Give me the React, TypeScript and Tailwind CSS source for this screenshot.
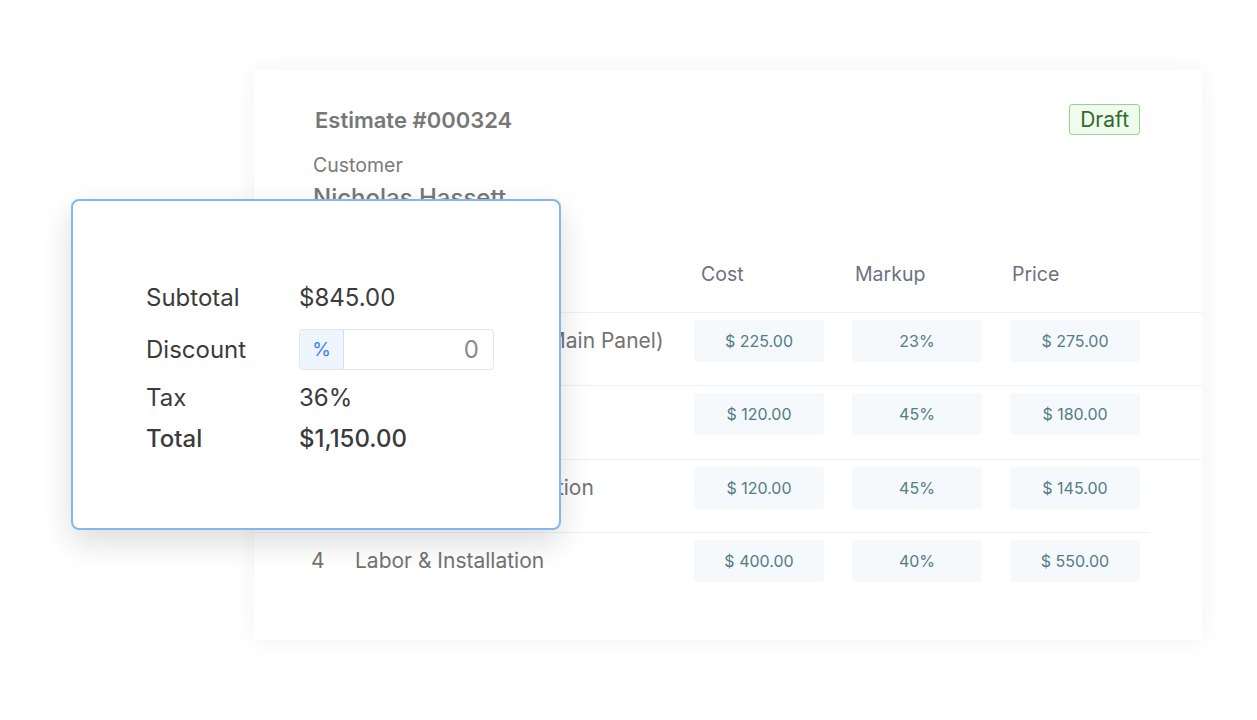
import { type ReactNode } from 'react';

type LineItem = { no: number; name: string; cost: string; markup: string; price: string };

const ITEMS: LineItem[] = [
  { no: 1, name: 'Service Upgrades (Main Panel)', cost: '$ 225.00', markup: '23%', price: '$ 275.00' },
  { no: 2, name: 'Copper Wiring', cost: '$ 120.00', markup: '45%', price: '$ 180.00' },
  { no: 3, name: 'Whole-Home Protection', cost: '$ 120.00', markup: '45%', price: '$ 145.00' },
  { no: 4, name: 'Labor & Installation', cost: '$ 400.00', markup: '40%', price: '$ 550.00' },
];

function Cell({ children }: { children: ReactNode }) {
  return (
    <div className="flex h-[42px] w-[130px] shrink-0 items-center justify-center rounded-[3px] bg-[#f6f9fc] text-[16px] text-[#527d84]">
      {children}
    </div>
  );
}

function SummaryRow({ label, children, strong }: { label: string; children: ReactNode; strong?: boolean }) {
  return (
    <div className={`flex items-center text-[24px] leading-[30px] text-[#3b3b3b] ${strong ? 'font-medium' : ''}`}>
      <span className="w-[153px] shrink-0">{label}</span>
      {children}
    </div>
  );
}

function TotalsCard() {
  return (
    <div className="absolute top-[199px] left-[71px] h-[331px] w-[490px] rounded-[8px] border-2 border-[#84b6f0] bg-white pt-[82px] pr-[30px] pl-[73px] shadow-[0_12px_32px_rgba(0,0,0,0.14)]">
      <SummaryRow label="Subtotal">$845.00</SummaryRow>
      <div className="mt-[16px]">
        <SummaryRow label="Discount">
          <div className="flex h-[41px] w-[195px] overflow-hidden rounded-[4px] border border-[#e3e6ea]">
            <span className="flex w-[44px] items-center justify-center border-r border-[#cfe0f7] bg-[#eef5ff] text-[19px] text-[#3b82f6]">
              %
            </span>
            <span className="flex flex-1 items-center justify-end pr-[14px] text-[#8a8a8a]">0</span>
          </div>
        </SummaryRow>
      </div>
      <div className="mt-[13px]">
        <SummaryRow label="Tax">36%</SummaryRow>
      </div>
      <div className="mt-[11px]">
        <SummaryRow label="Total" strong>
          $1,150.00
        </SummaryRow>
      </div>
    </div>
  );
}

export default function App() {
  return (
    <div
      className="relative h-[720px] w-[1257px] overflow-hidden bg-white"
      style={{ fontFamily: 'Inter, "Noto Sans", sans-serif' }}
    >
      <div className="ml-[254px] mt-[70px] h-[570px] w-[948px] rounded-[4px] bg-white pt-[36px] shadow-[0_0_26px_rgba(0,0,0,0.06)]">
        <div className="flex items-start justify-between pr-[62px] pl-[61px]">
          <h1 className="text-[22px] leading-[28px] font-semibold text-[#777777]">Estimate #000324</h1>
          <span className="mt-[-2px] rounded-[3px] border border-[#95d591] bg-[#effbec] px-[10px] text-[21px] leading-[29px] text-[#2f6b2b]">
            Draft
          </span>
        </div>
        <p className="mt-[18px] pl-[59px] text-[19.5px] leading-[24px] text-[#7a7a7a]">Customer</p>
        <p className="mt-[6px] pl-[59px] text-[24px] leading-[30px] font-medium text-[#777777]">Nicholas Hassett</p>

        <div className="mt-[49px] flex pl-[447px] text-[19.5px] leading-[24px] text-[#6b7280]">
          <span className="w-[154px]">Cost</span>
          <span className="w-[157px]">Markup</span>
          <span>Price</span>
        </div>

        <div className="mt-[26px]">
          {ITEMS.map((it, i) => (
            <div
              key={it.no}
              className={`flex h-[73.4px] border-t border-[#f0f1f3] pt-[7px] pl-[57px] ${
                i === ITEMS.length - 1 ? 'mr-[52px]' : ''
              }`}
            >
              <div className="flex h-[42px] w-[383px] shrink-0 items-center text-[21px] text-[#737373]">
                <span className="w-[44px]">{it.no}</span>
                <span className="whitespace-nowrap">{it.name}</span>
              </div>
              <div className="flex gap-[28px]">
                <Cell>{it.cost}</Cell>
                <Cell>{it.markup}</Cell>
                <Cell>{it.price}</Cell>
              </div>
            </div>
          ))}
        </div>
      </div>

      <TotalsCard />
    </div>
  );
}
